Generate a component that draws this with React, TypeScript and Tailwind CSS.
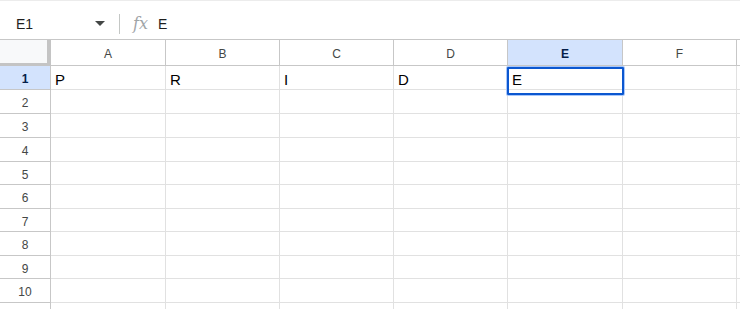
const COLS = [
  { key: "A", w: "w-[115px]" },
  { key: "B", w: "w-[114px]" },
  { key: "C", w: "w-[114px]" },
  { key: "D", w: "w-[114px]" },
  { key: "E", w: "w-[115px]" },
  { key: "F", w: "w-[114px]" },
];

const ROW_H = [
  "h-[24px]",
  "h-[24px]",
  "h-[24px]",
  "h-[24px]",
  "h-[23px]",
  "h-[24px]",
  "h-[23px]",
  "h-[24px]",
  "h-[23px]",
  "h-[24px]",
  "h-[24px]",
];

const DATA: Record<string, string> = { A: "P", B: "R", C: "I", D: "D", E: "E" };

export default function App() {
  return (
    <div className="h-[309px] w-[740px] overflow-hidden bg-white font-['Liberation_Sans',Arial,sans-serif] text-[#1f1f1f]">
      {/* formula bar */}
      <div className="flex h-[40px] items-center border-t border-t-[#ececec] border-b border-b-[#c7c7c7] pt-[8px]">
        <div className="flex w-[119px] items-center pl-[16px] pr-[14px]">
          <span className="text-[14px]">E1</span>
          <svg className="ml-auto" width="10" height="6" viewBox="0 0 10 6">
            <path d="M0 0h10L5 5z" fill="#444746" />
          </svg>
        </div>
        <div className="h-[20px] w-px bg-[#c4c7c5]" />
        <span className="ml-[13px] font-['DejaVu_Serif',serif] text-[16px] italic text-[#a0a4a8]">
          fx
        </span>
        <span className="ml-[10px] text-[14px]">E</span>
      </div>

      {/* grid */}
      <div className="relative">
        {/* header row */}
        <div className="flex h-[26px]">
          <div className="w-[51px] shrink-0 border-r-4 border-b-[3px] border-[#c4c4c4] bg-[#f8f9fa]" />
          {COLS.map((c) => (
            <div
              key={c.key}
              className={`${c.w} flex shrink-0 items-center justify-center border-r border-b border-[#c7c7c7] pt-[2px] text-[12px] ${
                c.key === "E"
                  ? "bg-[#d3e3fd] font-bold text-[#041e49]"
                  : "bg-white text-[#444746]"
              }`}
            >
              {c.key}
            </div>
          ))}
          <div className="w-[10px] shrink-0 border-b border-[#c7c7c7]" />
        </div>

        {ROW_H.map((h, i) => (
          <div key={i} className={`flex ${h}`}>
            <div
              className={`flex w-[51px] shrink-0 items-center justify-center border-r border-b border-[#c7c7c7] pt-[3px] text-[12px] ${
                i === 0
                  ? "bg-[#d3e3fd] font-bold text-[#041e49]"
                  : "bg-white text-[#444746]"
              }`}
            >
              {i < 10 ? i + 1 : ""}
            </div>
            {COLS.map((c) => (
              <div
                key={c.key}
                className={`${c.w} flex shrink-0 items-center border-r border-b border-[#e1e1e1] pl-[4px] pt-[5px] text-[15px] text-black`}
              >
                {i === 0 ? DATA[c.key] : ""}
              </div>
            ))}
            <div className="w-[10px] shrink-0 border-b border-[#e1e1e1]" />
          </div>
        ))}

        {/* active cell */}
        <div className="pointer-events-none absolute left-[507px] top-[27px] h-[28px] w-[117px] rounded-[1px] border-2 border-[#0b57d0] shadow-[0_0_0_1px_#a8c7fa]" />
      </div>
    </div>
  );
}
